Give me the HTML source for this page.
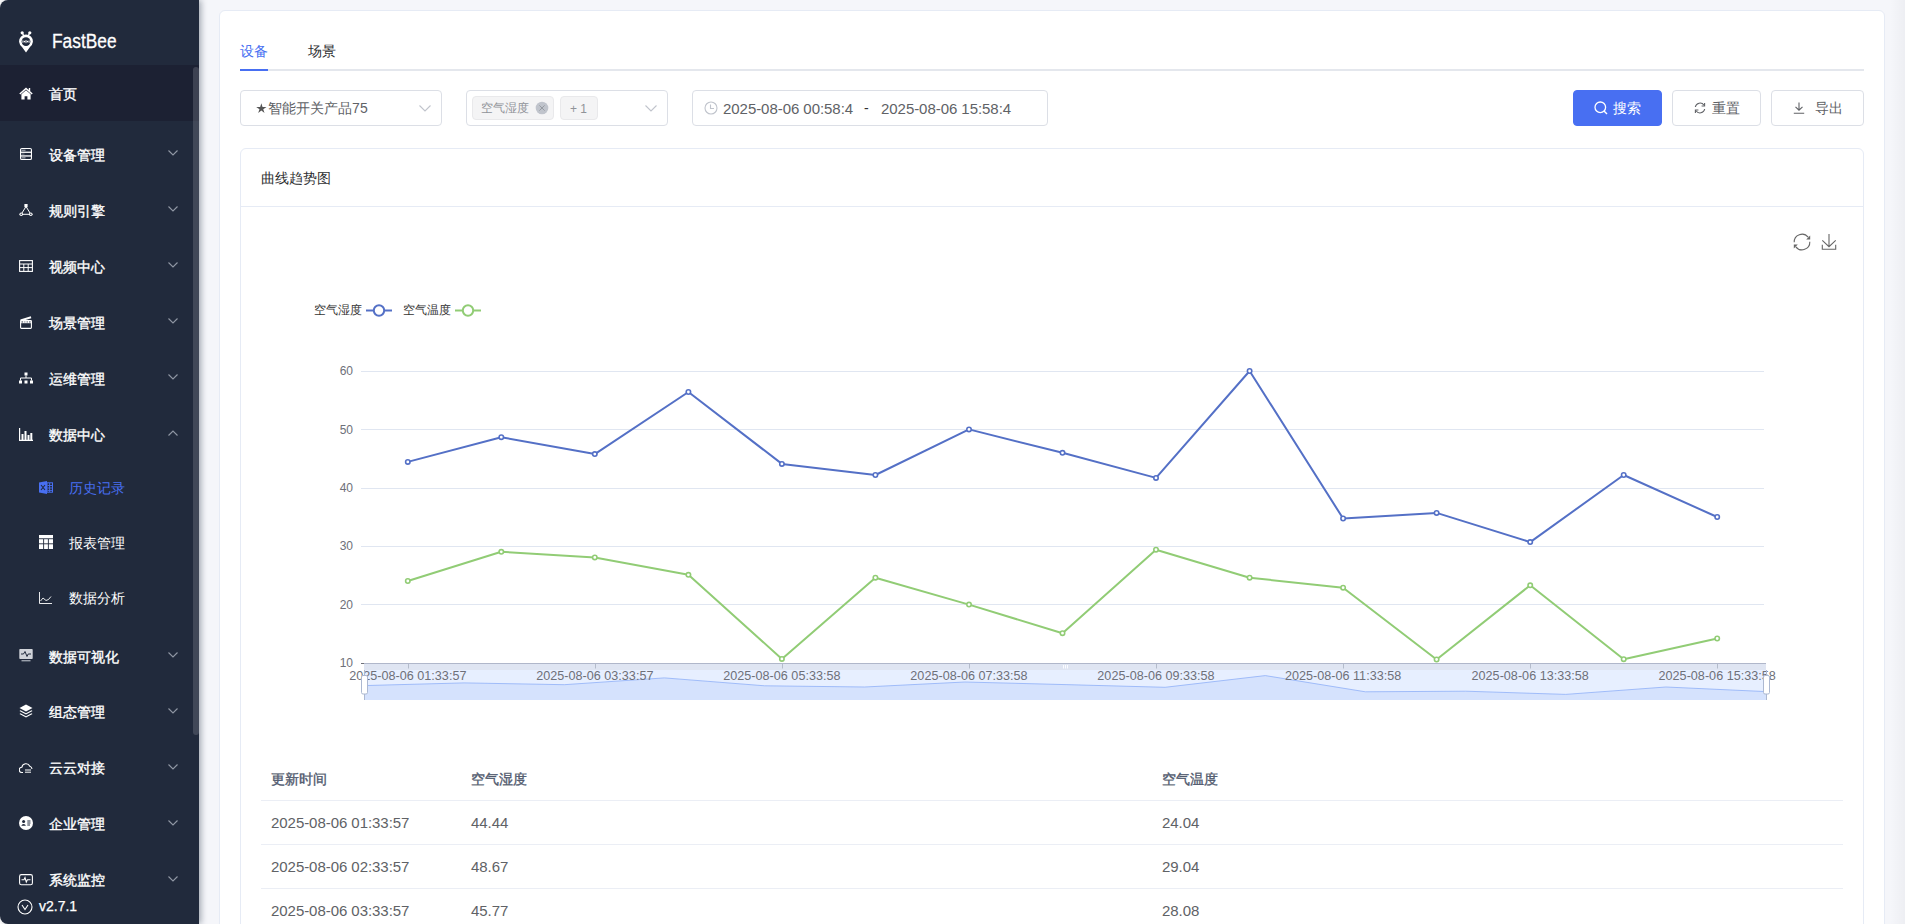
<!DOCTYPE html>
<html><head><meta charset="utf-8">
<style>
*{box-sizing:border-box;margin:0;padding:0}
html,body{width:1905px;height:924px;overflow:hidden;background:#f5f6fa;font-family:"Liberation Sans",sans-serif;position:relative}
.abs{position:absolute}
#side{position:absolute;left:0;top:0;width:199px;height:924px;background:#212a3c;border-radius:8px 0 0 8px;box-shadow:2px 0 6px rgba(0,21,41,.35);overflow:hidden;z-index:2}
#cornerbg{position:absolute;left:0;top:0;width:20px;height:924px;background:#fff}
.mi{position:absolute;left:0;width:199px;height:20px;color:#fff;font-size:14px;line-height:20px;font-weight:400;-webkit-text-stroke:0.35px #fff}
.mi .t{position:absolute;left:49px;top:0;white-space:nowrap}
.mi .ic{position:absolute;left:19px;top:3.5px}
.mi .ch{position:absolute;left:168px;top:5.5px}
.sub{font-weight:normal;-webkit-text-stroke:0}
.sub .t{left:69px}
.sub .ic{left:39px}
#card{position:absolute;left:219px;top:10px;width:1666px;height:940px;background:#fff;border:1px solid #e6ebf5;border-radius:6px}
.box{position:absolute;top:90px;height:36px;border:1px solid #dcdfe6;border-radius:4px;background:#fff;font-size:14px;color:#606266}
.th{position:absolute;font-size:14px;line-height:20px;color:#515a6e;font-weight:400;-webkit-text-stroke:0.35px #515a6e;white-space:nowrap}
.td{position:absolute;font-size:14px;line-height:20px;color:#606266;white-space:nowrap}
.num,.td.num{font-size:15px;letter-spacing:-.05px}
</style></head>
<body>
<div id="cornerbg"></div>
<div id="side">
  <svg class="abs" style="left:19px;top:30.5px" width="14" height="23" viewBox="0 0 14 23">
    <circle cx="3.2" cy="1.8" r="1.6" fill="#fff"/><circle cx="10.8" cy="1.8" r="1.6" fill="#fff"/>
    <path d="M3.6 2.6 L5.2 5.2 M10.4 2.6 L8.8 5.2" stroke="#fff" stroke-width="1.2"/>
    <path d="M7 21.6 L3 15.9 A6.9 6.9 0 1 1 11 15.9 Z" fill="#fff"/>
    <circle cx="7" cy="10.6" r="4.4" fill="#212a3c"/>
    <path d="M7 9 v3.2 M3.9 9.4 v2.4 M10.1 9.4 v2.4" stroke="#fff" stroke-width="0.9"/><circle cx="5.5" cy="10.6" r="0.8" fill="#fff"/><circle cx="8.5" cy="10.6" r="0.8" fill="#fff"/>
  </svg>
  <div class="abs" style="left:52px;top:29px;color:#fff;font-size:20.5px;line-height:24px;white-space:nowrap;transform:scaleX(.845);transform-origin:0 0;-webkit-text-stroke:0.3px #fff">FastBee</div>
  <div class="abs" style="left:0;top:65px;width:199px;height:56px;background:#1c2133"></div>
  <div class="mi" style="top:83.5px;color:#fff"><svg class="ic" width="14" height="13" viewBox="0 0 14 13"><path d="M7 0.5 L0.3 6.6 L1.3 7.6 L7 2.5 L12.7 7.6 L13.7 6.6 L11.2 4.3 V1 H9.8 V3.1 Z" fill="#fff"/><path d="M2.4 7.3 L7 3.3 L11.6 7.3 V12.5 H8.4 V9.2 H5.6 V12.5 H2.4 Z" fill="#fff"/></svg><span class="t">首页</span></div><div class="mi" style="top:144.6px;color:#fff"><svg class="ic" style="left:20px;top:3.2px" width="12" height="12" viewBox="0 0 12 12"><rect x="0.55" y="0.55" width="10.9" height="10.9" rx="1.3" fill="none" stroke="#fff" stroke-width="1.1"/><rect x="0.5" y="3.6" width="11" height="1.3" fill="#fff"/><rect x="0.5" y="7.3" width="11" height="1.3" fill="#fff"/><rect x="1.5" y="1.6" width="4" height="1.4" fill="#8a909b"/><rect x="1.5" y="5.4" width="3" height="1.4" fill="#5d6472"/><rect x="1.5" y="9.1" width="4" height="1.4" fill="#8a909b"/></svg><span class="t">设备管理</span><svg class="ch" width="10" height="6" viewBox="0 0 10 6"><path d="M0.5 0.5 L5 5 L9.5 0.5" fill="none" stroke="#8f96a3" stroke-width="1.15"/></svg></div><div class="mi" style="top:200.6px;color:#fff"><svg class="ic" width="14" height="13" viewBox="0 0 14 13"><path d="M7 2.5 L2.2 10.3 H11.8 Z" fill="none" stroke="#fff" stroke-width="1"/><rect x="5.4" y="0" width="3.2" height="3.2" fill="#fff"/><circle cx="2.2" cy="10.3" r="1.8" fill="#fff"/><circle cx="11.8" cy="10.3" r="1.8" fill="#fff"/><circle cx="2.2" cy="10.3" r="0.8" fill="#212a3c"/><circle cx="11.8" cy="10.3" r="0.8" fill="#212a3c"/></svg><span class="t">规则引擎</span><svg class="ch" width="10" height="6" viewBox="0 0 10 6"><path d="M0.5 0.5 L5 5 L9.5 0.5" fill="none" stroke="#8f96a3" stroke-width="1.15"/></svg></div><div class="mi" style="top:256.6px;color:#fff"><svg class="ic" width="14" height="12" viewBox="0 0 14 12"><rect x="0.6" y="0.6" width="12.8" height="10.8" fill="none" stroke="#fff" stroke-width="1.1"/><path d="M0.6 4 H13.4 M0.6 7.6 H13.4 M4.8 4 V11.4 M9.2 4 V11.4" stroke="#fff" stroke-width="1"/></svg><span class="t">视频中心</span><svg class="ch" width="10" height="6" viewBox="0 0 10 6"><path d="M0.5 0.5 L5 5 L9.5 0.5" fill="none" stroke="#8f96a3" stroke-width="1.15"/></svg></div><div class="mi" style="top:312.6px;color:#fff"><svg class="ic" style="left:20px;top:3.5px" width="12" height="13" viewBox="0 0 12 13"><path d="M0.3 3.6 L10.8 0.2 L11.3 2.2 L0.8 5.4 Z" fill="#fff"/><rect x="0.6" y="4.6" width="10.8" height="7.8" rx="0.8" fill="none" stroke="#fff" stroke-width="1.1"/><rect x="0.6" y="4.6" width="10.8" height="2.6" fill="#fff"/><rect x="1.5" y="5.5" width="1.6" height="0.9" fill="#212a3c"/><rect x="4.4" y="5.5" width="0.9" height="0.9" fill="#212a3c"/><rect x="6.6" y="5.5" width="1.2" height="0.9" fill="#212a3c"/><rect x="9" y="5.5" width="1.6" height="0.9" fill="#212a3c"/></svg><span class="t">场景管理</span><svg class="ch" width="10" height="6" viewBox="0 0 10 6"><path d="M0.5 0.5 L5 5 L9.5 0.5" fill="none" stroke="#8f96a3" stroke-width="1.15"/></svg></div><div class="mi" style="top:368.6px;color:#fff"><svg class="ic" width="14" height="12" viewBox="0 0 14 12"><rect x="5.5" y="0.5" width="3" height="3" fill="#fff"/><path d="M7 3.5 V6 M1.5 8.5 V6 H12.5 V8.5" stroke="#fff" stroke-width="1" fill="none"/><rect x="0" y="8.5" width="3" height="3" fill="#fff"/><rect x="5.5" y="8.5" width="3" height="3" fill="#fff"/><rect x="11" y="8.5" width="3" height="3" fill="#fff"/></svg><span class="t">运维管理</span><svg class="ch" width="10" height="6" viewBox="0 0 10 6"><path d="M0.5 0.5 L5 5 L9.5 0.5" fill="none" stroke="#8f96a3" stroke-width="1.15"/></svg></div><div class="mi" style="top:424.6px;color:#fff"><svg class="ic" width="14" height="13" viewBox="0 0 14 13"><path d="M0.6 0 V12.4 H14" stroke="#fff" stroke-width="1.2" fill="none"/><rect x="2.5" y="6" width="2" height="6" fill="#fff"/><rect x="5.5" y="3" width="2" height="9" fill="#fff"/><rect x="8.5" y="7" width="2" height="5" fill="#fff"/><rect x="11.3" y="5" width="2" height="7" fill="#fff"/></svg><span class="t">数据中心</span><svg class="ch" width="10" height="6" viewBox="0 0 10 6"><path d="M0.5 5.5 L5 1 L9.5 5.5" fill="none" stroke="#8f96a3" stroke-width="1.15"/></svg></div><div class="mi sub" style="top:478.0px;color:#486ff2"><svg class="ic" style="margin-top:-1px" width="14" height="13" viewBox="0 0 14 13"><path d="M0 1.5 L8 0 V13 L0 11.5 Z" fill="#486ff2"/><rect x="8" y="1.8" width="5.5" height="9.4" fill="none" stroke="#486ff2" stroke-width="1"/><path d="M8.5 4.5 H13 M8.5 7 H13 M8.5 9.4 H13 M10.6 2 V11" stroke="#486ff2" stroke-width="0.9"/><path d="M2 4 L6 9 M6 4 L2 9" stroke="#212a3c" stroke-width="1.1"/></svg><span class="t">历史记录</span></div><div class="mi sub" style="top:533.0px;color:#fff"><svg class="ic" style="margin-top:-2px" width="14" height="14" viewBox="0 0 14 14"><rect x="0" y="0" width="14" height="14" fill="#fff"/><rect x="0" y="3.3" width="14" height="0.9" fill="#212a3c"/><path d="M4.6 4 V14 M9.4 4 V14 M0 8.8 H14" stroke="#212a3c" stroke-width="0.9"/></svg><span class="t">报表管理</span></div><div class="mi sub" style="top:588.0px;color:#fff"><svg class="ic" width="13" height="12" viewBox="0 0 13 12"><path d="M0.5 0 V11.5 H13" stroke="#fff" stroke-width="0.9" fill="none"/><path d="M1.5 9 L4 6 L7 8.5 L9.5 7.5 L12 4.5" stroke="#fff" stroke-width="0.9" fill="none"/></svg><span class="t">数据分析</span></div><div class="mi" style="top:646.5px;color:#fff"><svg class="ic" style="margin-top:-1px" width="14" height="13" viewBox="0 0 14 13"><rect x="0.3" y="0" width="13.4" height="10" rx="0.8" fill="#d0d3d9"/><path d="M2 5 H4.5 L6 2.5 L8 7.5 L9.2 5 H12" stroke="#212a3c" stroke-width="1" fill="none"/><rect x="2.5" y="11" width="9" height="1.4" fill="#9aa0ab"/></svg><span class="t">数据可视化</span><svg class="ch" width="10" height="6" viewBox="0 0 10 6"><path d="M0.5 0.5 L5 5 L9.5 0.5" fill="none" stroke="#8f96a3" stroke-width="1.15"/></svg></div><div class="mi" style="top:702.0px;color:#fff"><svg class="ic" style="margin-top:-1.5px" width="14" height="14" viewBox="0 0 14 14"><path d="M7 0.5 L13.5 4 L7 7.5 L0.5 4 Z" fill="#fff"/><path d="M1.5 6.3 L7 9.3 L12.5 6.3 L13.5 7 L7 10.4 L0.5 7 Z" fill="#fff"/><path d="M1.5 9.3 L7 12.3 L12.5 9.3 L13.5 10 L7 13.5 L0.5 10 Z" fill="#fff"/></svg><span class="t">组态管理</span><svg class="ch" width="10" height="6" viewBox="0 0 10 6"><path d="M0.5 0.5 L5 5 L9.5 0.5" fill="none" stroke="#8f96a3" stroke-width="1.15"/></svg></div><div class="mi" style="top:758.0px;color:#fff"><svg class="ic" width="14" height="12" viewBox="0 0 14 12"><path d="M4 10.5 H3 A2.6 2.6 0 0 1 2.8 5.3 A4.2 4.2 0 0 1 10.8 4.3 A3 3 0 0 1 13 7" fill="none" stroke="#fff" stroke-width="1.1"/><path d="M6 8 H12 M6 10.2 H12" stroke="#fff" stroke-width="1"/></svg><span class="t">云云对接</span><svg class="ch" width="10" height="6" viewBox="0 0 10 6"><path d="M0.5 0.5 L5 5 L9.5 0.5" fill="none" stroke="#8f96a3" stroke-width="1.15"/></svg></div><div class="mi" style="top:814.0px;color:#fff"><svg class="ic" style="margin-top:-2px" width="14" height="14" viewBox="0 0 14 14"><circle cx="7" cy="7" r="7" fill="#fff"/><circle cx="4.6" cy="5.6" r="1.5" fill="#212a3c"/><path d="M2.3 9.8 A2.4 2.4 0 0 1 6.9 9.8 Z" fill="#212a3c"/><path d="M8.3 5 H11.5 M8.3 7 H11.5 M8.3 9 H11" stroke="#212a3c" stroke-width="1"/></svg><span class="t">企业管理</span><svg class="ch" width="10" height="6" viewBox="0 0 10 6"><path d="M0.5 0.5 L5 5 L9.5 0.5" fill="none" stroke="#8f96a3" stroke-width="1.15"/></svg></div><div class="mi" style="top:870.0px;color:#fff"><svg class="ic" width="14" height="12" viewBox="0 0 14 12"><rect x="0.6" y="0.6" width="12.8" height="10.2" rx="1.8" fill="none" stroke="#fff" stroke-width="1.1"/><path d="M2.5 5.8 H5 L6 3.6 L7.3 8 L8.4 5.8 H11.5" stroke="#fff" stroke-width="1.1" fill="none"/></svg><span class="t">系统监控</span><svg class="ch" width="10" height="6" viewBox="0 0 10 6"><path d="M0.5 0.5 L5 5 L9.5 0.5" fill="none" stroke="#8f96a3" stroke-width="1.15"/></svg></div>
  <div class="abs" style="left:193px;top:67px;width:6px;height:668px;background:rgba(150,156,168,0.27);border-radius:3px"></div>
  <svg class="abs" style="left:17px;top:899px" width="16" height="16" viewBox="0 0 16 16"><circle cx="8" cy="8" r="7" fill="none" stroke="#fff" stroke-width="1.1"/><path d="M5 6 L8 10.5 L11 6" fill="none" stroke="#fff" stroke-width="1.1"/></svg>
  <div class="abs" style="left:39px;top:897px;color:#fff;font-size:14px;line-height:18px;-webkit-text-stroke:0.25px #fff">v2.7.1</div>
</div>

<div class="abs" style="left:1890px;top:0;width:15px;height:924px;background:linear-gradient(to right,rgba(0,0,0,0),rgba(0,0,20,0.03))"></div>
<div id="card"></div>
<!-- tabs -->
<div class="abs" style="left:240px;top:69px;width:1624px;height:2px;background:#e4e7ed"></div>
<div class="abs" style="left:240px;top:69px;width:28px;height:2px;background:#486ff2"></div>
<div class="abs" style="left:240px;top:41px;font-size:14px;line-height:20px;color:#486ff2">设备</div>
<div class="abs" style="left:308px;top:41px;font-size:14px;line-height:20px;color:#303133">场景</div>

<!-- form -->
<div class="box" style="left:240px;width:202px">
  <svg class="abs" style="left:15px;top:12px" width="11" height="11" viewBox="0 0 11 11"><polygon points="5.35,0.20 6.53,3.98 10.49,3.93 7.25,6.22 8.52,9.97 5.35,7.60 2.18,9.97 3.45,6.22 0.21,3.93 4.17,3.98" fill="#555"/></svg><div class="abs" style="left:27px;top:7px;line-height:20px;color:#606266;white-space:nowrap">智能开关产品<span class="num" style="font-size:14px;letter-spacing:0.2px">75</span></div>
  <svg class="abs" style="left:178px;top:14px" width="12" height="7" viewBox="0 0 12 7"><path d="M0.5 0.5 L6 6 L11.5 0.5" fill="none" stroke="#c0c4cc" stroke-width="1.1"/></svg>
</div>
<div class="box" style="left:466px;width:202px">
  <div class="abs" style="left:5px;top:5px;width:82px;height:24px;background:#f4f4f5;border:1px solid #e9e9eb;border-radius:4px"></div>
  <div class="abs" style="left:14px;top:10px;font-size:12px;line-height:14px;color:#909399">空气湿度</div>
  <svg class="abs" style="left:68px;top:10px" width="14" height="14" viewBox="0 0 14 14"><circle cx="7" cy="7" r="6.3" fill="#c0c4cc"/><path d="M4.4 4.4 L9.6 9.6 M9.6 4.4 L4.4 9.6" stroke="#8c9097" stroke-width="0.8"/></svg>
  <div class="abs" style="left:93px;top:5px;width:38px;height:24px;background:#f4f4f5;border:1px solid #e9e9eb;border-radius:4px"></div>
  <div class="abs" style="left:103px;top:11px;font-size:12px;line-height:14px;color:#909399;white-space:nowrap">+&nbsp;1</div>
  <svg class="abs" style="left:178px;top:14px" width="12" height="7" viewBox="0 0 12 7"><path d="M0.5 0.5 L6 6 L11.5 0.5" fill="none" stroke="#c0c4cc" stroke-width="1.1"/></svg>
</div>
<div class="box" style="left:692px;width:356px">
  <svg class="abs" style="left:11px;top:10px" width="14" height="14" viewBox="0 0 14 14"><circle cx="7" cy="7" r="6" fill="none" stroke="#c0c4cc" stroke-width="1.1"/><path d="M6.5 3.5 V7.5 H10" fill="none" stroke="#c0c4cc" stroke-width="1.1"/></svg>
  <div class="abs num" style="left:30px;top:8px;line-height:20px;color:#606266;white-space:nowrap">2025-08-06 00:58:4</div>
  <div class="abs" style="left:171px;top:7px;line-height:20px;color:#303133">-</div>
  <div class="abs num" style="left:188px;top:8px;line-height:20px;color:#606266;white-space:nowrap">2025-08-06 15:58:4</div>
</div>
<div class="box" style="left:1573px;width:89px;background:#486ff2;border-color:#486ff2;color:#fff">
  <svg class="abs" style="left:20px;top:10px" width="14" height="14" viewBox="0 0 14 14"><circle cx="6.3" cy="6.3" r="5.3" fill="none" stroke="#fff" stroke-width="1.3"/><path d="M10 10 L13 13" stroke="#fff" stroke-width="1.4"/></svg>
  <div class="abs" style="left:39px;top:7px;line-height:20px">搜索</div>
</div>
<div class="box" style="left:1672px;width:89px">
  <svg class="abs" style="left:21px;top:11px" width="12" height="12" viewBox="0 0 12 12"><path d="M1.3 5 A4.8 4.8 0 0 1 10 3.2 M10.7 7 A4.8 4.8 0 0 1 2 8.8" fill="none" stroke="#606266" stroke-width="1.1"/><path d="M10.6 1 V4 H7.6 M1.4 11 V8 H4.4" fill="none" stroke="#606266" stroke-width="1.1"/></svg>
  <div class="abs" style="left:39px;top:7px;line-height:20px">重置</div>
</div>
<div class="box" style="left:1771px;width:93px">
  <svg class="abs" style="left:21px;top:11px" width="12" height="12" viewBox="0 0 12 12"><path d="M6 0.5 V8 M2.5 4.8 L6 8.2 L9.5 4.8 M0.8 11.3 H11.2" fill="none" stroke="#606266" stroke-width="1.1"/></svg>
  <div class="abs" style="left:43px;top:7px;line-height:20px">导出</div>
</div>

<!-- chart card -->
<div class="abs" style="left:240px;top:148px;width:1624px;height:800px;border:1px solid #e6ebf5;border-radius:6px;background:#fff"></div>
<div class="abs" style="left:241px;top:206px;width:1622px;height:1px;background:#e6ebf5"></div>
<div class="abs" style="left:261px;top:168px;font-size:14px;line-height:20px;color:#303133">曲线趋势图</div>
<svg class="abs" style="left:0;top:0" width="1905" height="924" viewBox="0 0 1905 924">
<line x1="361" y1="604.5" x2="1764" y2="604.5" stroke="#e0e6f1" stroke-width="1"/>
<line x1="361" y1="546.5" x2="1764" y2="546.5" stroke="#e0e6f1" stroke-width="1"/>
<line x1="361" y1="488.5" x2="1764" y2="488.5" stroke="#e0e6f1" stroke-width="1"/>
<line x1="361" y1="429.5" x2="1764" y2="429.5" stroke="#e0e6f1" stroke-width="1"/>
<line x1="361" y1="371.5" x2="1764" y2="371.5" stroke="#e0e6f1" stroke-width="1"/>
<text x="353" y="667.2" text-anchor="end" font-size="12" fill="#6e7079" font-family="Liberation Sans">10</text>
<text x="353" y="608.8" text-anchor="end" font-size="12" fill="#6e7079" font-family="Liberation Sans">20</text>
<text x="353" y="550.4" text-anchor="end" font-size="12" fill="#6e7079" font-family="Liberation Sans">30</text>
<text x="353" y="492.0" text-anchor="end" font-size="12" fill="#6e7079" font-family="Liberation Sans">40</text>
<text x="353" y="433.6" text-anchor="end" font-size="12" fill="#6e7079" font-family="Liberation Sans">50</text>
<text x="353" y="375.2" text-anchor="end" font-size="12" fill="#6e7079" font-family="Liberation Sans">60</text>
<line x1="361" y1="663.5" x2="1764" y2="663.5" stroke="#6e7079" stroke-width="1"/>
<polyline points="407.8,461.9 501.3,437.2 594.8,454.1 688.4,392.0 781.9,463.9 875.4,475.0 969.0,429.4 1062.5,452.8 1156.0,477.9 1249.6,371.0 1343.1,518.5 1436.6,512.9 1530.2,542.1 1623.7,475.0 1717.2,517.0" fill="none" stroke="#5470c6" stroke-width="2" stroke-linejoin="bevel"/><circle cx="407.8" cy="461.9" r="2.2" fill="#fff" stroke="#5470c6" stroke-width="1.6"/><circle cx="501.3" cy="437.2" r="2.2" fill="#fff" stroke="#5470c6" stroke-width="1.6"/><circle cx="594.8" cy="454.1" r="2.2" fill="#fff" stroke="#5470c6" stroke-width="1.6"/><circle cx="688.4" cy="392.0" r="2.2" fill="#fff" stroke="#5470c6" stroke-width="1.6"/><circle cx="781.9" cy="463.9" r="2.2" fill="#fff" stroke="#5470c6" stroke-width="1.6"/><circle cx="875.4" cy="475.0" r="2.2" fill="#fff" stroke="#5470c6" stroke-width="1.6"/><circle cx="969.0" cy="429.4" r="2.2" fill="#fff" stroke="#5470c6" stroke-width="1.6"/><circle cx="1062.5" cy="452.8" r="2.2" fill="#fff" stroke="#5470c6" stroke-width="1.6"/><circle cx="1156.0" cy="477.9" r="2.2" fill="#fff" stroke="#5470c6" stroke-width="1.6"/><circle cx="1249.6" cy="371.0" r="2.2" fill="#fff" stroke="#5470c6" stroke-width="1.6"/><circle cx="1343.1" cy="518.5" r="2.2" fill="#fff" stroke="#5470c6" stroke-width="1.6"/><circle cx="1436.6" cy="512.9" r="2.2" fill="#fff" stroke="#5470c6" stroke-width="1.6"/><circle cx="1530.2" cy="542.1" r="2.2" fill="#fff" stroke="#5470c6" stroke-width="1.6"/><circle cx="1623.7" cy="475.0" r="2.2" fill="#fff" stroke="#5470c6" stroke-width="1.6"/><circle cx="1717.2" cy="517.0" r="2.2" fill="#fff" stroke="#5470c6" stroke-width="1.6"/>
<polyline points="407.8,581.0 501.3,551.8 594.8,557.4 688.4,574.8 781.9,658.9 875.4,577.7 969.0,604.6 1062.5,633.2 1156.0,549.7 1249.6,577.7 1343.1,587.7 1436.6,659.5 1530.2,585.3 1623.7,659.2 1717.2,638.5" fill="none" stroke="#91cc75" stroke-width="2" stroke-linejoin="bevel"/><circle cx="407.8" cy="581.0" r="2.2" fill="#fff" stroke="#91cc75" stroke-width="1.6"/><circle cx="501.3" cy="551.8" r="2.2" fill="#fff" stroke="#91cc75" stroke-width="1.6"/><circle cx="594.8" cy="557.4" r="2.2" fill="#fff" stroke="#91cc75" stroke-width="1.6"/><circle cx="688.4" cy="574.8" r="2.2" fill="#fff" stroke="#91cc75" stroke-width="1.6"/><circle cx="781.9" cy="658.9" r="2.2" fill="#fff" stroke="#91cc75" stroke-width="1.6"/><circle cx="875.4" cy="577.7" r="2.2" fill="#fff" stroke="#91cc75" stroke-width="1.6"/><circle cx="969.0" cy="604.6" r="2.2" fill="#fff" stroke="#91cc75" stroke-width="1.6"/><circle cx="1062.5" cy="633.2" r="2.2" fill="#fff" stroke="#91cc75" stroke-width="1.6"/><circle cx="1156.0" cy="549.7" r="2.2" fill="#fff" stroke="#91cc75" stroke-width="1.6"/><circle cx="1249.6" cy="577.7" r="2.2" fill="#fff" stroke="#91cc75" stroke-width="1.6"/><circle cx="1343.1" cy="587.7" r="2.2" fill="#fff" stroke="#91cc75" stroke-width="1.6"/><circle cx="1436.6" cy="659.5" r="2.2" fill="#fff" stroke="#91cc75" stroke-width="1.6"/><circle cx="1530.2" cy="585.3" r="2.2" fill="#fff" stroke="#91cc75" stroke-width="1.6"/><circle cx="1623.7" cy="659.2" r="2.2" fill="#fff" stroke="#91cc75" stroke-width="1.6"/><circle cx="1717.2" cy="638.5" r="2.2" fill="#fff" stroke="#91cc75" stroke-width="1.6"/>
<rect x="364" y="670" width="1402" height="30" fill="rgb(231,239,255)"/>
<path d="M364.0,685.6 L464.1,682.9 L564.3,684.7 L664.4,677.9 L764.6,685.8 L864.7,687.0 L964.9,682.0 L1065.0,684.6 L1165.1,687.3 L1265.3,675.6 L1365.4,691.8 L1465.6,691.2 L1565.7,694.4 L1665.9,687.0 L1766.0,691.6 L1766,700 L364,700 Z" fill="rgb(213,226,253)"/>
<path d="M364.0,685.6 L464.1,682.9 L564.3,684.7 L664.4,677.9 L764.6,685.8 L864.7,687.0 L964.9,682.0 L1065.0,684.6 L1165.1,687.3 L1265.3,675.6 L1365.4,691.8 L1465.6,691.2 L1565.7,694.4 L1665.9,687.0 L1766.0,691.6" fill="none" stroke="#8fb0f7" stroke-width="0.8"/>
<rect x="364" y="663.5" width="1402" height="6.5" fill="rgb(223,229,242)"/>
<line x1="361" y1="663.5" x2="1766" y2="663.5" stroke="#b0b7ca" stroke-width="1"/>
<line x1="361" y1="663.5" x2="364" y2="663.5" stroke="#6e7079" stroke-width="1"/>
<line x1="408.5" y1="664" x2="408.5" y2="668.5" stroke="#b4bccb" stroke-width="1"/>
<line x1="595.5" y1="664" x2="595.5" y2="668.5" stroke="#b4bccb" stroke-width="1"/>
<line x1="782.5" y1="664" x2="782.5" y2="668.5" stroke="#b4bccb" stroke-width="1"/>
<line x1="969.5" y1="664" x2="969.5" y2="668.5" stroke="#b4bccb" stroke-width="1"/>
<line x1="1156.5" y1="664" x2="1156.5" y2="668.5" stroke="#b4bccb" stroke-width="1"/>
<line x1="1343.5" y1="664" x2="1343.5" y2="668.5" stroke="#b4bccb" stroke-width="1"/>
<line x1="1530.5" y1="664" x2="1530.5" y2="668.5" stroke="#b4bccb" stroke-width="1"/>
<line x1="1717.5" y1="664" x2="1717.5" y2="668.5" stroke="#b4bccb" stroke-width="1"/>
<rect x="1063" y="665" width="1" height="3.5" fill="#fbfcff"/>
<rect x="1065" y="665" width="1" height="3.5" fill="#fbfcff"/>
<rect x="1067" y="665" width="1" height="3.5" fill="#fbfcff"/>
<text x="407.8" y="679.5" text-anchor="middle" font-size="12.6" fill="#6e7079" font-family="Liberation Sans" letter-spacing="0.02">2025-08-06 01:33:57</text>
<text x="594.8" y="679.5" text-anchor="middle" font-size="12.6" fill="#6e7079" font-family="Liberation Sans" letter-spacing="0.02">2025-08-06 03:33:57</text>
<text x="781.9" y="679.5" text-anchor="middle" font-size="12.6" fill="#6e7079" font-family="Liberation Sans" letter-spacing="0.02">2025-08-06 05:33:58</text>
<text x="969.0" y="679.5" text-anchor="middle" font-size="12.6" fill="#6e7079" font-family="Liberation Sans" letter-spacing="0.02">2025-08-06 07:33:58</text>
<text x="1156.0" y="679.5" text-anchor="middle" font-size="12.6" fill="#6e7079" font-family="Liberation Sans" letter-spacing="0.02">2025-08-06 09:33:58</text>
<text x="1343.1" y="679.5" text-anchor="middle" font-size="12.6" fill="#6e7079" font-family="Liberation Sans" letter-spacing="0.02">2025-08-06 11:33:58</text>
<text x="1530.2" y="679.5" text-anchor="middle" font-size="12.6" fill="#6e7079" font-family="Liberation Sans" letter-spacing="0.02">2025-08-06 13:33:58</text>
<text x="1717.2" y="679.5" text-anchor="middle" font-size="12.6" fill="#6e7079" font-family="Liberation Sans" letter-spacing="0.02">2025-08-06 15:33:58</text>
<line x1="364.5" y1="670" x2="364.5" y2="700" stroke="#acb8d1" stroke-width="1"/>
<rect x="361.5" y="675.5" width="6" height="18.5" rx="1.5" fill="#fff" stroke="#acb8d1" stroke-width="1"/>
<line x1="1766.5" y1="670" x2="1766.5" y2="700" stroke="#acb8d1" stroke-width="1"/>
<rect x="1763.5" y="675.5" width="6" height="18.5" rx="1.5" fill="#fff" stroke="#acb8d1" stroke-width="1"/>
<text x="313.5" y="314" font-size="12" fill="#333" font-family="Liberation Sans">空气湿度</text>
<line x1="366" y1="310.5" x2="392" y2="310.5" stroke="#5470c6" stroke-width="2"/><circle cx="379" cy="310.5" r="5.2" fill="#fff" stroke="#5470c6" stroke-width="2"/>
<text x="402.5" y="314" font-size="12" fill="#333" font-family="Liberation Sans">空气温度</text>
<line x1="455" y1="310.5" x2="481" y2="310.5" stroke="#91cc75" stroke-width="2"/><circle cx="468" cy="310.5" r="5.2" fill="#fff" stroke="#91cc75" stroke-width="2"/>
<g fill="none" stroke="#666" stroke-width="1.1"><path d="M1794.20,242.27 A7.8,7.8 0 0 1 1808.15,237.20"/><path d="M1809.80,241.73 A7.8,7.8 0 0 1 1795.85,246.80"/><path d="M1810.2,235.6 L1810.2,239.6 L1806.2,239.6 Z" fill="#666" stroke="none"/><path d="M1793.8,248.6 L1793.8,244.6 L1797.8,244.6 Z" fill="#666" stroke="none"/><path d="M1829,234 V246.5 M1822.3,240.3 L1829,246.7 L1835.7,240.3"/><path d="M1822.3,244.8 V249.3 H1835.7 V244.8"/></g>
</svg>
<div class="th" style="top:769px;left:271px">更新时间</div><div class="th" style="top:769px;left:471px">空气湿度</div><div class="th" style="top:769px;left:1162px">空气温度</div>
<div class="abs" style="left:261px;top:800px;width:1582px;height:1px;background:#ebeef5"></div>
<div class="td num" style="top:813px;left:271px">2025-08-06 01:33:57</div><div class="td num" style="top:813px;left:471px">44.44</div><div class="td num" style="top:813px;left:1162px">24.04</div>
<div class="abs" style="left:261px;top:844px;width:1582px;height:1px;background:#ebeef5"></div>
<div class="td num" style="top:857px;left:271px">2025-08-06 02:33:57</div><div class="td num" style="top:857px;left:471px">48.67</div><div class="td num" style="top:857px;left:1162px">29.04</div>
<div class="abs" style="left:261px;top:888px;width:1582px;height:1px;background:#ebeef5"></div>
<div class="td num" style="top:901px;left:271px">2025-08-06 03:33:57</div><div class="td num" style="top:901px;left:471px">45.77</div><div class="td num" style="top:901px;left:1162px">28.08</div>
</body></html>
